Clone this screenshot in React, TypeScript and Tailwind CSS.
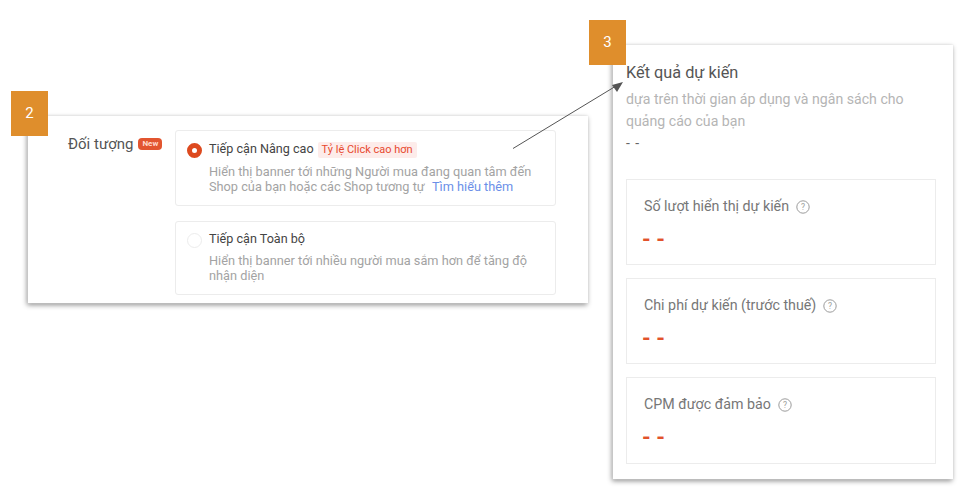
const HelpIcon = () => (
  <svg width="14" height="14" viewBox="0 0 14 14" fill="none" className="shrink-0">
    <circle cx="7" cy="7" r="6.2" stroke="#9b9b9b" strokeWidth="1" />
    <text x="7" y="10" textAnchor="middle" fontSize="8.5" fill="#9b9b9b" fontFamily="Roboto, sans-serif">
      ?
    </text>
  </svg>
);

const Badge = ({ n, className }: { n: number; className: string }) => (
  <div className={`absolute flex h-[45px] w-[37px] items-center justify-center bg-[#df8e2c] text-[15px] text-white ${className}`}>
    {n}
  </div>
);

const Stat = ({ label, h }: { label: string; h: string }) => (
  <div className={`${h} border border-[#ececec] px-[17px] pt-[18px]`}>
    <div className="flex items-center gap-[7px] text-[14.25px] leading-[17px] text-[#777]">
      {label} <HelpIcon />
    </div>
    <div className="mt-[15px] -ml-[2px] text-[22px] font-bold leading-[20px] text-[#e2522b]">- -</div>
  </div>
);

const App = () => {
  return (
    <div className="relative h-[498px] w-[976px] overflow-hidden bg-white font-['Roboto',sans-serif]">
      {/* Left panel */}
      <div className="absolute left-[28px] top-[116px] flex h-[187px] w-[560px] bg-white pl-[40px] pt-[14px] shadow-[0_0_2px_#ddd,-1px_2px_5px_rgba(0,0,0,0.45)]">
        <div className="flex h-[28px] w-[107px] items-center gap-[5px] text-[15px] text-[#555]">
          Đối tượng
          <span className="rounded-[4px] bg-[#e2552f] px-[4px] text-[8px] font-bold leading-[12px] text-[#ffd9cc]">New</span>
        </div>
        <div className="flex w-[381px] flex-col gap-[15px]">
          <div className="flex h-[76px] rounded-[3px] border border-[#ececec] pl-[11px] pt-[10px]">
            <span className="mt-[2px] flex h-[15px] w-[15px] shrink-0 items-center justify-center rounded-full border-[5px] border-[#dd4a1f] bg-white" />
            <div className="ml-[7px]">
              <div className="flex h-[17px] items-center text-[12.6px] text-[#444]">
                Tiếp cận Nâng cao
                <span className="ml-[4px] rounded-[2px] bg-[#fdecea] px-[4px] text-[11px] leading-[16px] text-[#e8492e]">Tỷ lệ Click cao hơn</span>
              </div>
              <p className="mt-[6px] whitespace-nowrap text-[12.75px] leading-[15px] text-[#a3a3a3]">
                Hiển thị banner tới những Người mua đang quan tâm đến
                <br />
                Shop của bạn hoặc các Shop tương tự <span className="ml-[4px] text-[#6b8fe8]">Tìm hiểu thêm</span>
              </p>
            </div>
          </div>
          <div className="flex h-[74px] rounded-[3px] border border-[#ececec] pl-[11px] pt-[9px]">
            <span className="mt-[2px] h-[15px] w-[15px] shrink-0 rounded-full border border-[#ececec]" />
            <div className="ml-[7px]">
              <div className="h-[17px] text-[12.6px] leading-[16px] text-[#444]">Tiếp cận Toàn bộ</div>
              <p className="mt-[5px] w-[330px] text-[12.75px] leading-[15px] text-[#a3a3a3]">
                Hiển thị banner tới nhiều người mua sắm hơn để tăng độ nhận diện
              </p>
            </div>
          </div>
        </div>
      </div>

      {/* Right panel */}
      <div className="absolute left-[613px] top-[45px] h-[434px] w-[340px] bg-white px-[13px] pt-[19px] shadow-[0_0_2px_#ddd,-1px_2px_5px_rgba(0,0,0,0.45)]">
        <div className="text-[16.3px] leading-[18px] text-[#555]">Kết quả dự kiến</div>
        <p className="mt-[6px] w-[300px] text-[14.15px] leading-[22px] text-[#b5b5b5]">
          dựa trên thời gian áp dụng và ngân sách cho quảng cáo của bạn
        </p>
        <div className="text-[14px] leading-[22px] tracking-[1px] text-[#666]">- -</div>
        <div className="mt-[25px] flex w-[310px] flex-col gap-[13px]">
          <Stat h="h-[86px]" label="Số lượt hiển thị dự kiến" />
          <Stat h="h-[86px]" label="Chi phí dự kiến (trước thuế)" />
          <Stat h="h-[87px]" label="CPM được đảm bảo" />
        </div>
      </div>

      <Badge n={2} className="left-[11px] top-[91px]" />
      <Badge n={3} className="left-[589px] top-[20px]" />

      {/* Arrow */}
      <svg className="absolute left-0 top-0" width="976" height="498" fill="none">
        <line x1="513" y1="148.5" x2="616" y2="86" stroke="#555" strokeWidth="1" />
        <path d="M623 82 L612 85 L617 92 Z" fill="#555" />
      </svg>
    </div>
  );
};

export default App;
